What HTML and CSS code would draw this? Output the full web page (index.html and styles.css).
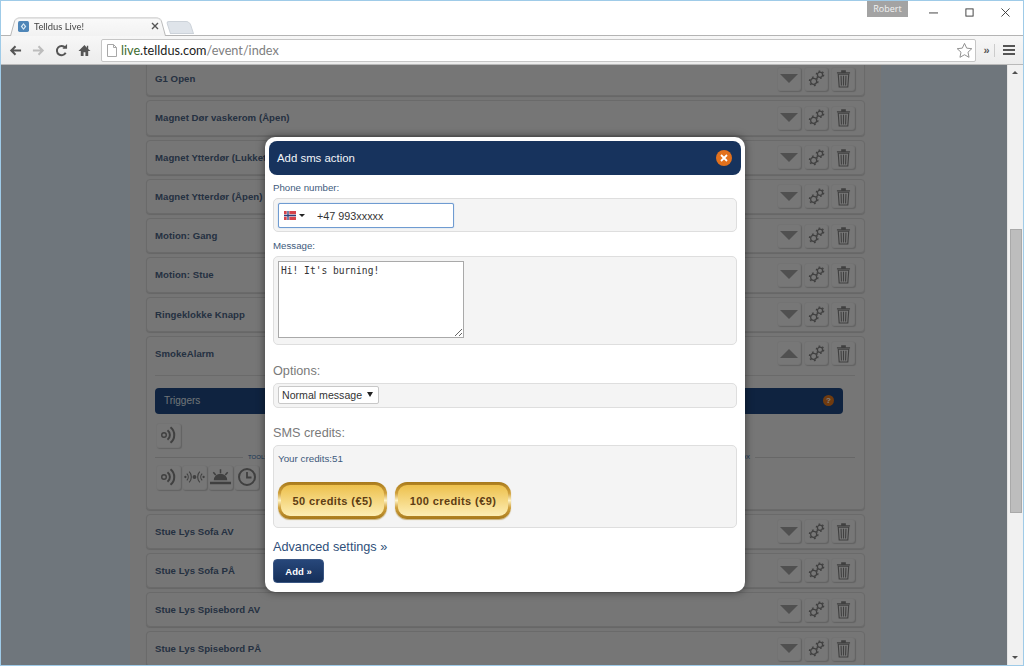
FILE: index.html
```html
<!DOCTYPE html>
<html lang="en">
<head>
    <meta charset="UTF-8">
    <title>Telldus Live!</title>
    <link rel="stylesheet" href="styles.css">
</head>
<body>
    <svg class="defs" width="0" height="0">
        <symbol id="gears" viewBox="0 0 18 18">
            <circle cx="6" cy="12" r="3.2" fill="none" stroke="currentColor" stroke-width="1.3"/>
            <circle cx="6" cy="12" r="4.5" fill="none" stroke="currentColor" stroke-width="1.4" stroke-dasharray="2 2.7"/>
            <circle cx="12.7" cy="5" r="2.7" fill="none" stroke="currentColor" stroke-width="1.3"/>
            <circle cx="12.7" cy="5" r="3.9" fill="none" stroke="currentColor" stroke-width="1.4" stroke-dasharray="1.8 2.28"/>
        </symbol>
        <symbol id="trash" viewBox="0 0 16 20">
            <path d="M1 3.2h14v1.400H1zM5.500 3.200V1.200h5v2" fill="currentColor"/>
            <path d="M2.400 5.400h11.200l-1 13.600H3.400zM5.400 7l.4 10.400M8 7v10.400M10.600 7l-.4 10.400" fill="none" stroke="currentColor" stroke-width="1.200"/>
        </symbol>
        <symbol id="signal" viewBox="0 0 20 20">
            <circle cx="5" cy="10" r="2.300" fill="none" stroke="currentColor" stroke-width="1.400"/>
            <path d="M8.500 5.200a6 6 0 0 1 0 9.600M11.500 2.200a10 10 0 0 1 0 15.600" fill="none" stroke="currentColor" stroke-width="2"/>
        </symbol>
        <symbol id="pair" viewBox="0 0 24 20">
            <circle cx="12" cy="10" r="2" fill="currentColor"/>
            <path d="M4 6.500a5 5 0 0 1 0 7M6.500 4.500a8 8 0 0 1 0 11M20 6.500a5 5 0 0 0 0 7M17.500 4.500a8 8 0 0 0 0 11" fill="none" stroke="currentColor" stroke-width="1.200"/>
            <circle cx="2.500" cy="10" r="1.200" fill="currentColor"/>
            <circle cx="21.500" cy="10" r="1.200" fill="currentColor"/>
        </symbol>
        <symbol id="sun" viewBox="0 0 24 20">
            <path d="M5 13.500a7 7 0 0 1 14 0zM1 15h22v2.500H1z" fill="currentColor"/>
            <path d="M12 2v4M4.500 5l2.500 3M19.500 5L17 8" fill="none" stroke="currentColor" stroke-width="1.600"/>
        </symbol>
        <symbol id="clock" viewBox="0 0 20 20">
            <circle cx="10" cy="10" r="8" fill="none" stroke="currentColor" stroke-width="2"/>
            <path d="M10 5v5.500h4.500" fill="none" stroke="currentColor" stroke-width="1.800"/>
        </symbol>
    </svg>

    <div class="titlebar">
        <div class="tab">
            <svg class="favicon" viewBox="0 0 10 10"><rect width="10" height="10" rx="1.500" fill="#4f86b8"/><path d="M5 1.800L7.500 5 5 8.200 2.500 5z" fill="#dcebf6"/><path d="M5 3.500L6.100 5 5 6.500 3.900 5z" fill="#4f86b8"/></svg>
            <span class="tab-title">Telldus Live!</span>
            <svg class="tab-close" viewBox="0 0 8 8"><path d="M1 1l6 6M7 1L1 7" stroke="#555" stroke-width="1.400"/></svg>
        </div>
        <div class="new-tab"></div>
        <div class="user-badge">Robert</div>
        <div class="window-controls">
            <svg viewBox="0 0 10 10"><path d="M0 5.500h10" stroke="#333" stroke-width="1"/></svg>
            <svg viewBox="0 0 10 10"><rect x="1" y="1" width="8" height="8" fill="none" stroke="#333" stroke-width="1"/></svg>
            <svg viewBox="0 0 10 10"><path d="M.5.500l9 9M9.500.500l-9 9" stroke="#333" stroke-width="1"/></svg>
        </div>
    </div>

    <div class="toolbar">
        <svg class="nav-icon" viewBox="0 0 14 14"><path d="M13 7H3M7 2.500L2.500 7 7 11.500" fill="none" stroke="#555" stroke-width="2.200"/></svg>
        <svg class="nav-icon" viewBox="0 0 14 14"><path d="M1 7h10M7 2.500L11.500 7 7 11.500" fill="none" stroke="#bcbcbc" stroke-width="2.200"/></svg>
        <svg class="nav-icon" viewBox="0 0 14 14"><path d="M11.500 9.500A5 5 0 1 1 11 4" fill="none" stroke="#555" stroke-width="2.100"/><path d="M8 5h5V0z" fill="#555"/></svg>
        <svg class="nav-icon" viewBox="0 0 14 14"><path d="M7 1L.5 7.500H3V13h3V9h2v4h3V7.500h2.500L11 5.500V2H9.500v2z" fill="#555"/></svg>
        <div class="omnibox">
            <svg class="page-icon" viewBox="0 0 10 13"><path d="M.5.500h6l3 3v9H.5zM6.500.500v3h3" fill="#fff" stroke="#a8a8a8"/></svg>
            <span class="url"><span class="url-host">live</span>.telldus.com<span class="url-path">/event/index</span></span>
            <svg class="star" viewBox="0 0 18 18"><path d="M9 1.500l2.300 5 5.400.6-4 3.700 1.100 5.400L9 13.500l-4.800 2.700 1.100-5.400-4-3.700 5.400-.6z" fill="#fff" stroke="#8a8a8a" stroke-width="1"/></svg>
        </div>
        <span class="more">»</span>
        <div class="menu-button"><i></i><i></i><i></i></div>
    </div>

    <div class="viewport">
        <div class="page">
            <div class="content">
                <div class="event-list">
                    <div class="event-row event-row-cut">
                        <div class="event-head">
                            <span class="event-name">G1 Open</span>
                            <div class="event-actions">
                                <span class="action"><i class="arrow-down"></i></span>
                                <span class="action"><svg><use href="#gears"/></svg></span>
                                <span class="action"><svg class="trash"><use href="#trash"/></svg></span>
                            </div>
                        </div>
                    </div>
                    <div class="event-row">
                        <div class="event-head">
                            <span class="event-name">Magnet Dør vaskerom (Åpen)</span>
                            <div class="event-actions">
                                <span class="action"><i class="arrow-down"></i></span>
                                <span class="action"><svg><use href="#gears"/></svg></span>
                                <span class="action"><svg class="trash"><use href="#trash"/></svg></span>
                            </div>
                        </div>
                    </div>
                    <div class="event-row">
                        <div class="event-head">
                            <span class="event-name">Magnet Ytterdør (Lukket)</span>
                            <div class="event-actions">
                                <span class="action"><i class="arrow-down"></i></span>
                                <span class="action"><svg><use href="#gears"/></svg></span>
                                <span class="action"><svg class="trash"><use href="#trash"/></svg></span>
                            </div>
                        </div>
                    </div>
                    <div class="event-row">
                        <div class="event-head">
                            <span class="event-name">Magnet Ytterdør (Åpen)</span>
                            <div class="event-actions">
                                <span class="action"><i class="arrow-down"></i></span>
                                <span class="action"><svg><use href="#gears"/></svg></span>
                                <span class="action"><svg class="trash"><use href="#trash"/></svg></span>
                            </div>
                        </div>
                    </div>
                    <div class="event-row">
                        <div class="event-head">
                            <span class="event-name">Motion: Gang</span>
                            <div class="event-actions">
                                <span class="action"><i class="arrow-down"></i></span>
                                <span class="action"><svg><use href="#gears"/></svg></span>
                                <span class="action"><svg class="trash"><use href="#trash"/></svg></span>
                            </div>
                        </div>
                    </div>
                    <div class="event-row">
                        <div class="event-head">
                            <span class="event-name">Motion: Stue</span>
                            <div class="event-actions">
                                <span class="action"><i class="arrow-down"></i></span>
                                <span class="action"><svg><use href="#gears"/></svg></span>
                                <span class="action"><svg class="trash"><use href="#trash"/></svg></span>
                            </div>
                        </div>
                    </div>
                    <div class="event-row">
                        <div class="event-head">
                            <span class="event-name">Ringeklokke Knapp</span>
                            <div class="event-actions">
                                <span class="action"><i class="arrow-down"></i></span>
                                <span class="action"><svg><use href="#gears"/></svg></span>
                                <span class="action"><svg class="trash"><use href="#trash"/></svg></span>
                            </div>
                        </div>
                    </div>
                    <div class="event-row">
                        <div class="event-head">
                            <span class="event-name">SmokeAlarm</span>
                            <div class="event-actions">
                                <span class="action"><i class="arrow-up"></i></span>
                                <span class="action"><svg><use href="#gears"/></svg></span>
                                <span class="action"><svg class="trash"><use href="#trash"/></svg></span>
                            </div>
                        </div>
                        <div class="event-body">
                            <div class="triggers-bar">
                                <span>Triggers</span>
                                <i class="help-dot">?</i>
                            </div>
                            <div class="tool-row">
                                <span class="tool"><svg><use href="#signal"/></svg></span>
                            </div>
                            <div class="toolbox-rule">
                                <span class="toolbox-label"><b>TOOLS</b><b>BOX</b></span>
                            </div>
                            <div class="tool-row">
                                <span class="tool"><svg><use href="#signal"/></svg></span>
                                <span class="tool"><svg class="wide"><use href="#pair"/></svg></span>
                                <span class="tool"><svg class="wide"><use href="#sun"/></svg></span>
                                <span class="tool"><svg><use href="#clock"/></svg></span>
                            </div>
                        </div>
                    </div>
                    <div class="event-row">
                        <div class="event-head">
                            <span class="event-name">Stue Lys Sofa AV</span>
                            <div class="event-actions">
                                <span class="action"><i class="arrow-down"></i></span>
                                <span class="action"><svg><use href="#gears"/></svg></span>
                                <span class="action"><svg class="trash"><use href="#trash"/></svg></span>
                            </div>
                        </div>
                    </div>
                    <div class="event-row">
                        <div class="event-head">
                            <span class="event-name">Stue Lys Sofa PÅ</span>
                            <div class="event-actions">
                                <span class="action"><i class="arrow-down"></i></span>
                                <span class="action"><svg><use href="#gears"/></svg></span>
                                <span class="action"><svg class="trash"><use href="#trash"/></svg></span>
                            </div>
                        </div>
                    </div>
                    <div class="event-row">
                        <div class="event-head">
                            <span class="event-name">Stue Lys Spisebord AV</span>
                            <div class="event-actions">
                                <span class="action"><i class="arrow-down"></i></span>
                                <span class="action"><svg><use href="#gears"/></svg></span>
                                <span class="action"><svg class="trash"><use href="#trash"/></svg></span>
                            </div>
                        </div>
                    </div>
                    <div class="event-row">
                        <div class="event-head">
                            <span class="event-name">Stue Lys Spisebord PÅ</span>
                            <div class="event-actions">
                                <span class="action"><i class="arrow-down"></i></span>
                                <span class="action"><svg><use href="#gears"/></svg></span>
                                <span class="action"><svg class="trash"><use href="#trash"/></svg></span>
                            </div>
                        </div>
                    </div>
                </div>
            </div>

            <div class="overlay"></div>

            <div class="modal">
                <div class="modal-header">
                    <span>Add sms action</span>
                    <svg class="modal-close" viewBox="0 0 16 16"><circle cx="8" cy="8" r="8" fill="#e2711d"/><path d="M5 5l6 6M11 5l-6 6" stroke="#fff" stroke-width="1.800"/></svg>
                </div>
                <label class="field-label">Phone number:</label>
                <div class="field-box field-box-phone">
                    <div class="phone-input">
                        <svg class="flag" viewBox="0 0 12 9"><rect width="12" height="9" fill="#d5434b"/><path d="M4 0v9M0 4.500h12" stroke="#fff" stroke-width="2.600"/><path d="M4 0v9M0 4.500h12" stroke="#2c3f7a" stroke-width="1.300"/></svg>
                        <i class="flag-caret"></i>
                        <input class="phone-text" type="text" value="+47 993xxxxx">
                    </div>
                </div>
                <label class="field-label">Message:</label>
                <div class="field-box field-box-message">
                    <textarea class="message">Hi! It's burning!</textarea>
                </div>
                <h3 class="section-title">Options:</h3>
                <div class="field-box field-box-small">
                    <div class="options-wrap">
                        <select class="options">
                            <option>Normal message</option>
                        </select>
                    </div>
                </div>
                <h3 class="section-title">SMS credits:</h3>
                <div class="field-box credits-box">
                    <div class="credits-text">Your credits:51</div>
                    <div class="credit-buttons">
                        <button class="gold-button gold-50" type="button">50 credits (€5)</button>
                        <button class="gold-button gold-100" type="button">100 credits (€9)</button>
                    </div>
                </div>
                <a class="advanced">Advanced settings »</a>
                <button class="add-button" type="button">Add »</button>
            </div>
        </div>
        <div class="scrollbar">
            <i class="scroll-up"></i>
            <div class="scroll-thumb"></div>
            <i class="scroll-down"></i>
        </div>
    </div>
</body>
</html>
```

FILE: styles.css
```css
* {
    box-sizing: border-box;
}
html, body {
    margin: 0;
    padding: 0;
    height: 100%;
}
body {
    display: flex;
    flex-direction: column;
    height: 666px;
    overflow: hidden;
    border: 1px solid #9fcbe8;
    font-family: "Liberation Sans", Arial, sans-serif;
    background-color: #fff;
}
.defs {
    position: absolute;
}

/* browser chrome */
.titlebar {
    display: flex;
    align-items: flex-end;
    height: 35px;
    padding-left: 9px;
    background-color: #fff;
    border-bottom: 1px solid #b4b4b4;
    flex-shrink: 0;
}
.tab {
    position: relative;
    display: flex;
    align-items: center;
    width: 156px;
    height: 20px;
    margin-bottom: -1px;
    padding: 0 7px 0 8px;
}
.tab::before {
    content: "";
    position: absolute;
    top: 0;
    left: 0;
    right: 0;
    bottom: 0;
    z-index: 0;
    background: linear-gradient(#fafafa, #f2f2f2);
    border: 1px solid #b8b8b8;
    border-bottom: none;
    border-radius: 5px 5px 0 0;
    transform: perspective(40px) rotateX(8deg);
    transform-origin: bottom;
}
.tab > * {
    position: relative;
}
.favicon {
    width: 11px;
    height: 11px;
}
.tab-title {
    flex: 1;
    margin-left: 5px;
    font-family: Lato, sans-serif;
    font-size: 9.4px;
    color: #444;
}
.tab-close {
    width: 8px;
    height: 8px;
}
.new-tab {
    width: 24px;
    height: 13px;
    margin: 0 0 1px 2px;
    background-color: #dfe4ea;
    border: 1px solid #ccd2d9;
    border-radius: 3px 4px 0 0;
    transform: skewX(18deg);
}
.user-badge {
    align-self: flex-start;
    width: 41px;
    height: 16px;
    margin-left: auto;
    background-color: #a3a3a3;
    font-family: "Open Sans", sans-serif;
    font-size: 9px;
    line-height: 15px;
    text-align: center;
    color: #f2f2f2;
}
.window-controls {
    display: flex;
    align-self: flex-start;
    gap: 27px;
    margin: 7px 13px 0 21px;
}
.window-controls svg {
    width: 9px;
    height: 9px;
}
.toolbar {
    display: flex;
    align-items: center;
    height: 29px;
    padding-left: 8px;
    background: linear-gradient(#f7f7f7, #ececec);
    border-bottom: 1px solid #b9b9b9;
    flex-shrink: 0;
}
.nav-icon {
    width: 13px;
    height: 13px;
    margin-right: 10px;
}
.omnibox {
    display: flex;
    align-items: center;
    width: 875px;
    height: 23px;
    padding: 0 2px 0 5px;
    background-color: #fff;
    border: 1px solid #c6c6c6;
    border-radius: 2px;
}
.page-icon {
    width: 10px;
    height: 13px;
}
.url {
    flex: 1;
    margin-left: 4px;
    font-family: Lato, sans-serif;
    font-size: 12.7px;
    color: #222;
}
.url-host {
    color: #3c6b2f;
}
.url-path {
    color: #808080;
}
.star {
    width: 17px;
    height: 17px;
}
.more {
    width: 16px;
    margin-left: 3px;
    border-right: 1px solid #ccc;
    font-size: 11px;
    line-height: 13px;
    font-weight: bold;
    text-align: center;
    color: #555;
}
.menu-button {
    display: flex;
    flex-direction: column;
    gap: 2px;
    width: 12px;
    margin-left: 8px;
}
.menu-button i {
    height: 2px;
    background-color: #555;
}

/* page */
.viewport {
    display: flex;
    flex: 1;
    min-height: 0;
}
.page {
    position: relative;
    flex: 1;
    overflow: hidden;
    background-color: #dfedf8;
}
.scrollbar {
    position: relative;
    width: 16px;
    background-color: #f1f1f1;
    border-left: 1px solid #e4e4e4;
}
.scroll-up, .scroll-down {
    position: absolute;
    left: 4px;
    width: 0;
    height: 0;
    border-left: 3px solid transparent;
    border-right: 3px solid transparent;
}
.scroll-up {
    top: 6px;
    border-bottom: 3px solid #505050;
}
.scroll-down {
    bottom: 6px;
    border-top: 3px solid #505050;
}
.scroll-thumb {
    position: absolute;
    top: 164px;
    left: 2px;
    right: 1px;
    height: 284px;
    background-color: #bdbdbd;
    border: 1px solid #a9a9a9;
}
.content {
    width: 751px;
    height: 100%;
    margin-left: 129px;
    padding: 0 16px;
    background-color: #ebebeb;
}
.event-list {
    display: flex;
    flex-direction: column;
    gap: 4px;
}
.event-row {
    padding: 0 9px 0 8px;
    background-color: #ececec;
    border: 1px solid #d4d4d4;
    border-radius: 4px;
    box-shadow: 0 1px 1px #cdcdcd;
}
.event-row-cut {
    margin-top: -5px;
    padding-top: 1px;
}
.event-head {
    display: flex;
    align-items: center;
    justify-content: space-between;
    height: 33.28px;
}
.event-name {
    font-size: 9.6px;
    font-weight: bold;
    letter-spacing: .05px;
    color: #4a6283;
}
.event-actions {
    display: flex;
    gap: 3px;
}
.action {
    display: flex;
    align-items: center;
    justify-content: center;
    width: 24px;
    height: 24px;
    background-color: #eee;
    border: 1px solid #e6e6e6;
    border-radius: 3px;
    box-shadow: 1px 1px 1px #c6c6c6;
    color: #808080;
}
.action svg {
    width: 17px;
    height: 17px;
}
.action svg.trash {
    width: 15px;
    height: 19px;
}
.arrow-down, .arrow-up {
    width: 0;
    height: 0;
    border-left: 9px solid transparent;
    border-right: 9px solid transparent;
}
.arrow-down {
    border-top: 9px solid #a0a0a0;
}
.arrow-up {
    border-bottom: 9px solid #a0a0a0;
}
.event-body {
    margin-top: 4.4px;
    padding: 12px 0 19px;
    border-top: 1px solid #d4d4d4;
}
.triggers-bar {
    display: flex;
    align-items: center;
    justify-content: space-between;
    width: 688px;
    height: 26px;
    padding: 0 9px;
    background-color: #1e4680;
    border-radius: 4px;
    font-size: 10px;
    color: #dfe6ee;
}
.help-dot {
    width: 11px;
    height: 11px;
    background-color: #e0761e;
    border-radius: 50%;
    font-size: 8px;
    font-style: normal;
    font-weight: bold;
    line-height: 11px;
    text-align: center;
    color: #fff;
}
.tool-row {
    display: flex;
    gap: 1px;
    margin: 9px 0 0 1px;
}
.tool {
    display: flex;
    align-items: center;
    justify-content: center;
    width: 25px;
    height: 25px;
    background-color: #eee;
    border: 1px solid #e6e6e6;
    border-radius: 3px;
    box-shadow: 1px 1px 1px #c6c6c6;
    color: #808080;
}
.tool svg {
    width: 20px;
    height: 20px;
}
.tool svg.wide {
    width: 23px;
}
.toolbox-rule {
    display: flex;
    align-items: center;
    margin-top: 9px;
    height: 1px;
    background-color: #cfcfcf;
}
.toolbox-label {
    display: flex;
    justify-content: space-between;
    width: 512px;
    margin-left: 88px;
    padding: 0 5px;
    background-color: #ececec;
    font-size: 6px;
    color: #2f6aa8;
}
.toolbox-label b {
    font-weight: normal;
}
.toolbox-rule + .tool-row {
    margin-top: 7px;
}
.overlay {
    position: absolute;
    top: 0;
    left: 0;
    right: 0;
    bottom: 0;
    background-color: rgba(0,0,0,0.5);
}

/* modal */
.modal {
    position: absolute;
    top: 72px;
    left: 264px;
    width: 480px;
    height: 455px;
    padding: 4px 8px;
    background-color: #fff;
    border-radius: 10px;
    box-shadow: 0 0 8px rgba(0,0,0,0.5);
}
.modal-header {
    display: flex;
    align-items: center;
    justify-content: space-between;
    height: 34px;
    margin: 0 -4px 6px;
    padding: 0 9px 0 8px;
    background-color: #17335d;
    border-radius: 8px;
    font-size: 11.4px;
    color: #f2f5f9;
}
.modal-close {
    width: 16px;
    height: 16px;
}
.field-label {
    display: block;
    height: 17px;
    font-size: 9.7px;
    line-height: 13px;
    color: #3e5a7c;
}
.field-box {
    margin-bottom: 7px;
    padding: 4px;
    background-color: #f4f4f4;
    border: 1px solid #dedede;
    border-radius: 5px;
}
.field-box-phone {
    padding-bottom: 3px;
}
.field-box-message {
    padding-bottom: 6px;
}
.field-box-small {
    height: 25px;
    margin-bottom: 6px;
    padding: 2px 4px;
}
.phone-input {
    display: flex;
    align-items: center;
    width: 176px;
    height: 25px;
    padding-left: 5px;
    background-color: #fff;
    border: 1px solid #6f9bd1;
    border-radius: 2px;
    box-shadow: 0 0 1px #7fa8dc;
}
.flag {
    width: 12px;
    height: 9px;
}
.flag-caret {
    width: 0;
    height: 0;
    margin-left: 3px;
    border-left: 3px solid transparent;
    border-right: 3px solid transparent;
    border-top: 3px solid #222;
}
.phone-text {
    width: 130px;
    margin-left: 12px;
    padding: 0;
    border: none;
    outline: none;
    font-family: "Liberation Sans", Arial, sans-serif;
    font-size: 10.8px;
    color: #333;
}
.message {
    display: block;
    width: 186px;
    height: 77px;
    padding: 3px 2px;
    background-color: #fff;
    border: 1px solid #a9a9a9;
    outline: none;
    font-family: "DejaVu Sans Mono", monospace;
    font-size: 9.6px;
    color: #333;
}
.section-title {
    margin: 0;
    height: 31px;
    padding-top: 11px;
    font-size: 12.7px;
    font-weight: normal;
    line-height: 16px;
    color: #7a7a7a;
}
.options-wrap {
    position: relative;
    width: 101px;
}
.options-wrap::after {
    content: "";
    position: absolute;
    top: 6px;
    right: 6px;
    border-left: 3px solid transparent;
    border-right: 3px solid transparent;
    border-top: 5px solid #222;
}
.options {
    display: block;
    width: 101px;
    height: 18px;
    padding: 0 0 0 3px;
    appearance: none;
    background-color: #fff;
    border: 1px solid #c8c8c8;
    border-radius: 2px;
    font-family: "Liberation Sans", Arial, sans-serif;
    font-size: 10.6px;
    color: #333;
}
.credits-box {
    height: 83px;
    margin-bottom: 11px;
}
.credits-text {
    height: 32px;
    padding-top: 2px;
    font-size: 9.8px;
    line-height: 13px;
    color: #3e5a7c;
}
.credit-buttons {
    display: flex;
    gap: 8px;
}
.gold-button {
    height: 37px;
    padding: 0;
    background:
        linear-gradient(#edc04c, #fdeeb4) padding-box,
        linear-gradient(#a87a1c, #cf9f3a 30%, #fff3c4 50%, #cf9f3a 70%, #a87a1c) border-box;
    border: 3px solid transparent;
    border-radius: 12px;
    box-shadow: 0 1px 1px #c9b27a;
    font-family: "Liberation Sans", Arial, sans-serif;
    font-size: 11px;
    font-weight: bold;
    letter-spacing: .4px;
    color: #5e3d14;
}
.gold-50 {
    width: 109px;
}
.gold-100 {
    width: 116px;
}
.advanced {
    display: block;
    height: 20px;
    font-size: 12.7px;
    line-height: 16px;
    color: #2f4f7a;
}
.add-button {
    display: block;
    width: 51px;
    height: 24px;
    padding: 0;
    background: linear-gradient(#27477a, #152f59);
    border: 1px solid #3a5683;
    border-radius: 4px;
    font-family: "Liberation Sans", Arial, sans-serif;
    font-size: 9.5px;
    font-weight: bold;
    color: #fff;
}
```
